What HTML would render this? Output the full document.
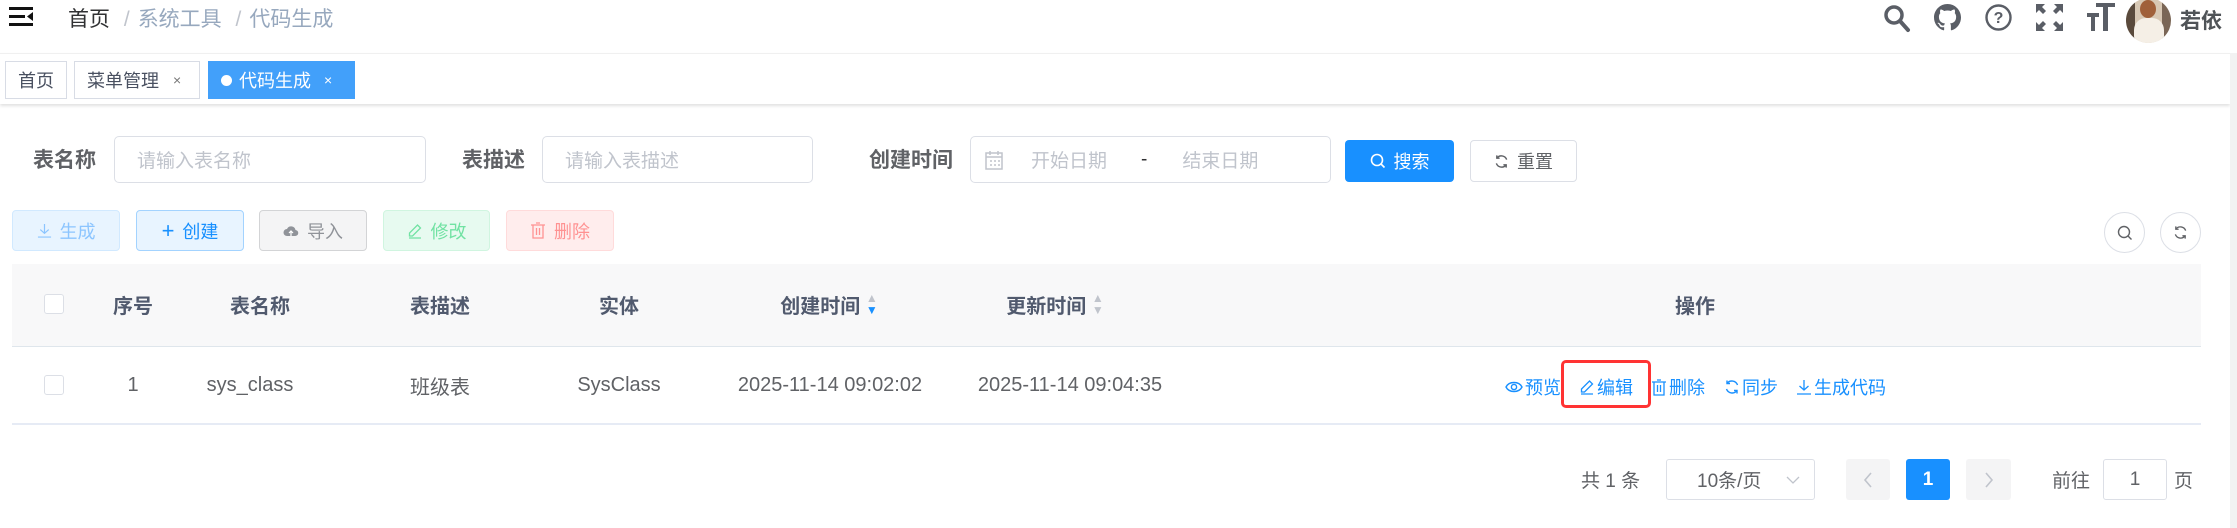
<!DOCTYPE html>
<html><head><meta charset="utf-8">
<style>
*{margin:0;padding:0;box-sizing:border-box}
body{width:2237px;height:528px;overflow:hidden;background:#fff;font-family:"Liberation Sans","Noto Sans CJK SC",sans-serif;color:#606266;position:relative}
.a{position:absolute}
.c{display:flex;align-items:center;justify-content:center}
.tab{position:absolute;top:61px;height:38px;border:1px solid #d8dce5;font-size:18px;color:#495060;display:flex;align-items:center;padding:0 12px}
.lbl{position:absolute;top:144px;font-size:21px;font-weight:bold;color:#606266}
.inp{position:absolute;top:136px;height:47px;border:1px solid #dcdfe6;border-radius:5px;font-size:19px;color:#c0c4cc;display:flex;align-items:center;padding-left:22px}
.btn{position:absolute;top:210px;height:41px;border-radius:4px;font-size:18px;display:flex;align-items:center;justify-content:center;gap:8px}
.th{position:absolute;top:286px;height:36px;display:flex;align-items:center;font-size:20px;font-weight:bold;color:#515a6e;transform:translateX(-50%);white-space:nowrap}
.td{position:absolute;top:366px;height:38px;display:flex;align-items:center;font-size:20px;color:#606266;transform:translateX(-50%);white-space:nowrap}
.op{position:absolute;top:372px;height:30px;font-size:18px;color:#1890ff;display:flex;align-items:center;gap:2px}
.cb{position:absolute;left:44px;width:20px;height:20px;border:1px solid #dcdfe6;border-radius:3px;background:#fff}
.pg{position:absolute;top:459px;height:41px;border-radius:3px;display:flex;align-items:center;justify-content:center;font-size:19px}
</style></head><body>
<!-- header -->
<svg class="a" style="left:9px;top:7px" width="24" height="20" viewBox="0 0 24 20"><rect x="0" y="0" width="24" height="3" fill="#111"/><rect x="0" y="8" width="16" height="3" fill="#111"/><rect x="0" y="16" width="24" height="3" fill="#111"/><path d="M24 5 L18 9.5 L24 14Z" fill="#111"/></svg>
<div class="a" style="left:68px;top:3px;font-size:21px;color:#303133">首页 <span style="color:#c0c4cc;margin:0 8px">/</span><span style="color:#97a8be">系统工具</span> <span style="color:#c0c4cc;margin:0 8px">/</span><span style="color:#97a8be">代码生成</span></div>
<svg class="a" style="left:1883px;top:3px" width="28" height="30" viewBox="0 0 28 30"><circle cx="11" cy="12" r="8" fill="none" stroke="#5a5e66" stroke-width="3.5"/><path d="M17 18 L25 27" stroke="#5a5e66" stroke-width="4" stroke-linecap="round"/></svg>
<svg class="a" style="left:1934px;top:4px" width="27" height="27" viewBox="0 0 16 16"><path fill="#5a5e66" d="M8 0C3.58 0 0 3.58 0 8c0 3.54 2.29 6.53 5.47 7.59.4.07.55-.17.55-.38 0-.19-.01-.82-.01-1.49-2.01.37-2.530-.49-2.690-.94-.09-.23-.48-.94-.82-1.13-.28-.15-.68-.52-.01-.53.63-.01 1.08.58 1.23.82.72 1.21 1.870.87 2.330.66.07-.52.28-.87.51-1.07-1.78-.2-3.64-.89-3.640-3.95 0-.87.31-1.59.82-2.15-.08-.2-.36-1.020.08-2.12 0 0 .67-.21 2.2.82.64-.18 1.32-.27 2-.27.68 0 1.36.09 2 .27 1.53-1.04 2.2-.82 2.2-.82.44 1.1.16 1.92.08 2.12.51.56.82 1.27.82 2.15 0 3.07-1.87 3.75-3.65 3.95.29.25.54.73.54 1.48 0 1.07-.01 1.93-.01 2.2 0 .21.15.46.55.38A8.013 8.013 0 0016 8c0-4.42-3.58-8-8-8z"/></svg>
<svg class="a" style="left:1985px;top:4px" width="27" height="27" viewBox="0 0 27 27"><circle cx="13.5" cy="13.5" r="12" fill="none" stroke="#5a5e66" stroke-width="2.4"/><text x="13.5" y="19" font-size="16" font-weight="bold" text-anchor="middle" fill="#5a5e66" font-family="Liberation Sans">?</text></svg>
<svg class="a" style="left:2036px;top:4px" width="27" height="27" viewBox="0 0 27 27" fill="#5a5e66"><path d="M0 0h9l-3 3 4 4-3 3-4-4-3 3zM27 0v9l-3-3-4 4-3-3 4-4-3-3zM0 27v-9l3 3 4-4 3 3-4 4 3 3zM27 27h-9l3-3-4-4 3-3 4 4 3-3z"/></svg>
<svg class="a" style="left:2087px;top:3px" width="28" height="28" viewBox="0 0 28 28" fill="#5a5e66"><rect x="9" y="0" width="19" height="4"/><rect x="16" y="0" width="5" height="28"/><rect x="0" y="10" width="12" height="4"/><rect x="4" y="10" width="4" height="18"/></svg>
<div class="a" style="left:2126px;top:-2px;width:45px;height:45px;border-radius:50%;overflow:hidden;background:linear-gradient(90deg,#5a4a3c 0 20%,#d8c8b4 20% 80%,#7a6656 80%)"><div class="a" style="left:14px;top:2px;width:16px;height:18px;border-radius:50%;background:#a0603a"></div><div class="a" style="left:8px;top:20px;width:30px;height:30px;border-radius:40%;background:#f5efe6"></div></div>
<div class="a" style="left:2180px;top:5px;font-size:21px;font-weight:bold;color:#505458">若依</div>
<!-- tags bar -->
<div class="a" style="left:0;top:53px;width:2230px;height:51px;background:#fff;border-top:1px solid #f0f0f0;box-shadow:0 2px 3px rgba(0,0,0,.12)"></div>
<div class="tab" style="left:5px;width:62px">首页</div>
<div class="tab" style="left:74px;width:126px">菜单管理<span style="font-size:14px;margin-left:14px;color:#777">×</span></div>
<div class="tab" style="left:208px;width:147px;background:#42a0fa;border-color:#42a0fa;color:#fff"><span style="width:11px;height:11px;border-radius:50%;background:#fff;margin-right:7px"></span>代码生成<span style="font-size:14px;margin-left:13px">×</span></div>
<div class="a" style="left:2230px;top:53px;width:7px;height:475px;background:#f2f2f2"></div>
<!-- search form -->
<div class="lbl" style="left:33px">表名称</div>
<div class="inp" style="left:114px;width:312px">请输入表名称</div>
<div class="lbl" style="left:462px">表描述</div>
<div class="inp" style="left:542px;width:271px">请输入表描述</div>
<div class="lbl" style="left:869px">创建时间</div>
<div class="inp" style="left:970px;width:361px;padding-left:14px"><svg width="18" height="20" viewBox="0 0 18 20"><rect x="1" y="3" width="16" height="16" fill="none" stroke="#c0c4cc" stroke-width="1.5"/><path d="M1 7h16M5 1v4M13 1v4M5 11h2M9 11h2M13 11h2M5 15h2M9 15h2M13 15h2" stroke="#c0c4cc" stroke-width="1.5"/></svg><span style="margin-left:28px">开始日期</span><span style="color:#303133;margin:0 35px 0 34px">-</span><span>结束日期</span></div>
<div class="btn" style="left:1345px;top:140px;width:109px;height:42px;background:#1890ff;color:#fff"><svg width="16" height="16" viewBox="0 0 16 16"><circle cx="7" cy="7" r="5.5" fill="none" stroke="#fff" stroke-width="1.6"/><path d="M11 11l3.5 3.5" stroke="#fff" stroke-width="1.6"/></svg>搜索</div>
<div class="btn" style="left:1470px;top:140px;width:107px;height:42px;border:1px solid #dcdfe6;color:#606266"><svg width="15" height="15" viewBox="0 0 16 16" fill="none" stroke="#606266" stroke-width="1.5"><path d="M13.5 6A6 6 0 0 0 3 4.5M2.5 10A6 6 0 0 0 13 11.5"/><path d="M3 1.5v3h3M13 14.5v-3h-3"/></svg>重置</div>
<!-- toolbar -->
<div class="btn" style="left:12px;width:108px;background:#e8f4ff;border:1px solid #d1e9ff;color:#8cc5ff"><svg width="15" height="15" viewBox="0 0 16 16" fill="none" stroke="#8cc5ff" stroke-width="1.3"><path d="M8 1v10M3.5 7L8 11l4.5-4M1 15h14"/></svg>生成</div>
<div class="btn" style="left:136px;width:108px;background:#e8f4ff;border:1px solid #a3d3ff;color:#1890ff"><span style="font-size:22px;font-weight:300">+</span>创建</div>
<div class="btn" style="left:259px;width:108px;background:#f4f4f5;border:1px solid #d3d4d6;color:#909399"><svg width="16" height="14" viewBox="0 0 16 14"><path d="M4 12a3.5 3.5 0 0 1 0-7 4.5 4.5 0 0 1 8.5 1A3 3 0 0 1 12 12z" fill="#909399"/><path d="M8 7v5M6 9l2-2 2 2" stroke="#fff" stroke-width="1.2" fill="none"/></svg>导入</div>
<div class="btn" style="left:383px;width:107px;background:#e7faf0;border:1px solid #d0f5e0;color:#71e2a3"><svg width="16" height="16" viewBox="0 0 16 16" fill="none" stroke="#71e2a3" stroke-width="1.3"><path d="M10.5 2l3 3-8 8H2.5v-3z M2 15h12"/></svg>修改</div>
<div class="btn" style="left:506px;width:108px;background:#ffeded;border:1px solid #ffdbdb;color:#ff9292"><svg width="16" height="17" viewBox="0 0 16 17" fill="none" stroke="#ff9292" stroke-width="1.3"><path d="M1 3h14M6 1h4M3 3v13h10V3M6.5 6v7M9.5 6v7"/></svg>删除</div>
<div class="a c" style="left:2104px;top:212px;width:41px;height:41px;border:1px solid #dcdfe6;border-radius:50%"><svg width="16" height="16" viewBox="0 0 16 16"><circle cx="7" cy="7" r="5.5" fill="none" stroke="#606266" stroke-width="1.4"/><path d="M11 11l3.5 3.5" stroke="#606266" stroke-width="1.4"/></svg></div>
<div class="a c" style="left:2160px;top:212px;width:41px;height:41px;border:1px solid #dcdfe6;border-radius:50%"><svg width="15" height="15" viewBox="0 0 16 16" fill="none" stroke="#606266" stroke-width="1.4"><path d="M13.5 6A6 6 0 0 0 3 4.5M2.5 10A6 6 0 0 0 13 11.5"/><path d="M3 1.5v3h3M13 14.5v-3h-3"/></svg></div>
<!-- table -->
<div class="a" style="left:12px;top:264px;width:2189px;height:83px;background:#f8f8f9;border-bottom:1px solid #dfe6ec"></div>
<div class="a" style="left:12px;top:423px;width:2189px;height:2px;background:#e6ebf5"></div>
<div class="cb" style="top:294px"></div>
<div class="th" style="left:133px">序号</div>
<div class="th" style="left:260px">表名称</div>
<div class="th" style="left:440px">表描述</div>
<div class="th" style="left:619px">实体</div>
<div class="th" style="left:829px">创建时间&nbsp;<span style="display:inline-block;font-size:12px;line-height:12px;color:#c0c4cc">▲<br><span style="color:#1890ff">▼</span></span></div>
<div class="th" style="left:1055px">更新时间&nbsp;<span style="display:inline-block;font-size:12px;line-height:12px;color:#c0c4cc">▲<br>▼</span></div>
<div class="th" style="left:1695px">操作</div>
<div class="cb" style="top:375px"></div>
<div class="td" style="left:133px">1</div>
<div class="td" style="left:250px">sys_class</div>
<div class="td" style="left:440px">班级表</div>
<div class="td" style="left:619px">SysClass</div>
<div class="td" style="left:830px">2025-11-14 09:02:02</div>
<div class="td" style="left:1070px">2025-11-14 09:04:35</div>
<div class="op" style="left:1505px"><svg width="18" height="14" viewBox="0 0 18 14"><path d="M1 7C4 1 14 1 17 7C14 13 4 13 1 7Z" fill="none" stroke="#1890ff" stroke-width="1.4"/><circle cx="9" cy="7" r="2.6" fill="none" stroke="#1890ff" stroke-width="1.4"/></svg>预览</div>
<div class="op" style="left:1579px"><svg width="16" height="16" viewBox="0 0 16 16" fill="none" stroke="#1890ff" stroke-width="1.3"><path d="M10.5 2l3 3-8 8H2.5v-3z M2 15h12"/></svg>编辑</div>
<div class="a" style="left:1561px;top:360px;width:90px;height:48px;border:3px solid #f33;border-radius:5px"></div>
<div class="op" style="left:1651px"><svg width="16" height="17" viewBox="0 0 16 17" fill="none" stroke="#1890ff" stroke-width="1.3"><path d="M1 3h14M6 1h4M3 3v13h10V3M6.5 6v7M9.5 6v7"/></svg>删除</div>
<div class="op" style="left:1724px"><svg width="16" height="16" viewBox="0 0 16 16" fill="none" stroke="#1890ff" stroke-width="1.4"><path d="M13.5 6A6 6 0 0 0 3 4.5M2.5 10A6 6 0 0 0 13 11.5"/><path d="M3 1.5v3h3M13 14.5v-3h-3"/></svg>同步</div>
<div class="op" style="left:1796px"><svg width="16" height="16" viewBox="0 0 16 16" fill="none" stroke="#1890ff" stroke-width="1.3"><path d="M8 1v10M3.5 7L8 11l4.5-4M1 15h14"/></svg>生成代码</div>
<!-- pagination -->
<div class="a" style="left:1581px;top:466px;font-size:19px;color:#606266">共 1 条</div>
<div class="pg" style="left:1666px;width:149px;border:1px solid #dcdfe6;color:#606266;justify-content:flex-start;padding-left:30px">10条/页<svg style="position:absolute;right:14px" width="14" height="8" viewBox="0 0 14 8"><path d="M1 1l6 6 6-6" fill="none" stroke="#c0c4cc" stroke-width="1.3"/></svg></div>
<div class="pg" style="left:1846px;width:44px;background:#f4f4f5"><svg width="10" height="16" viewBox="0 0 10 16"><path d="M8 1L2 8l6 7" fill="none" stroke="#c0c4cc" stroke-width="1.6"/></svg></div>
<div class="pg" style="left:1906px;width:44px;background:#1890ff;color:#fff;font-weight:bold">1</div>
<div class="pg" style="left:1966px;width:45px;background:#f4f4f5"><svg width="10" height="16" viewBox="0 0 10 16"><path d="M2 1l6 7-6 7" fill="none" stroke="#c0c4cc" stroke-width="1.6"/></svg></div>
<div class="a" style="left:2052px;top:466px;font-size:19px;color:#606266">前往</div>
<div class="pg" style="left:2103px;width:64px;border:1px solid #dcdfe6;color:#606266">1</div>
<div class="a" style="left:2174px;top:466px;font-size:19px;color:#606266">页</div>
</body></html>
